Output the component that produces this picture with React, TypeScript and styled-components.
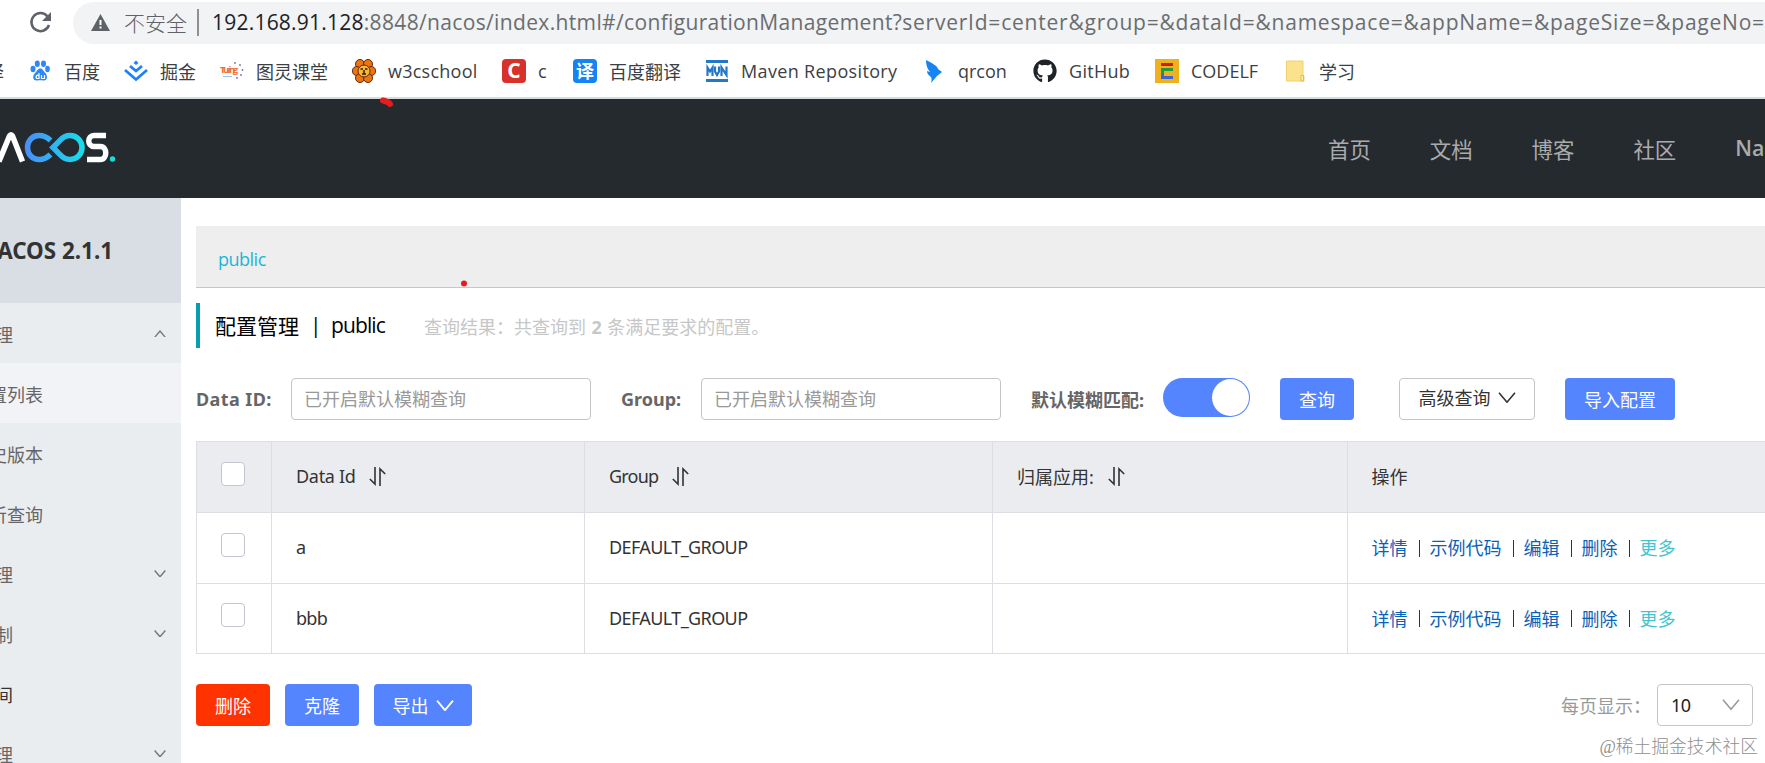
import React from "react";
import styled, { createGlobalStyle } from "styled-components";
import { FaGithub } from "react-icons/fa";

const Global = createGlobalStyle`
  *{box-sizing:border-box}
  html,body,#root{margin:0;height:763px;overflow:hidden;background:#fff}
  body{font-family:"Open Sans","Noto Sans CJK SC",sans-serif;font-size:18px;color:#333}
`;

const Page = styled.div`width:1765px;height:763px;overflow:hidden;position:relative;display:flex;flex-direction:column;`;

const AddressRow = styled.div`display:flex;height:44px;padding-top:1px;align-items:center;flex:none;`;
const NavTools = styled.div`width:73px;display:flex;padding-left:27px;svg{display:block}`;
const Omnibox = styled.div`
  flex:1;height:42px;background:#f1f3f4;border-radius:21px 0 0 21px;display:flex;align-items:center;
  padding-left:18px;white-space:nowrap;overflow:hidden;color:#5f6368;font-size:21px;
`;
const Insecure = styled.span`margin:-2px 0 0 14px;width:63px;font-weight:300;`;
const Divider = styled.i`width:2px;height:27px;background:#8d9194;margin:0 13px 0 10px;flex:none;`;
const Url = styled.span<{ $dark?: boolean; $ls: number }>`
  margin-top:-1px;color:${p => (p.$dark ? "#202124" : "#6a6d70")};letter-spacing:${p => p.$ls}px;
`;

const BookmarkRow = styled.div`display:flex;height:53px;align-items:center;flex:none;color:#3c4043;`;
const Bookmark = styled.div<{ $w: number; $ls?: number }>`
  width:${p => p.$w}px;flex:none;display:flex;align-items:center;gap:12px;white-space:nowrap;letter-spacing:${p => p.$ls || 0}px;
  svg{flex:none;display:block}
`;
const CutLabel = styled.div`width:28px;direction:rtl;padding-right:24px;white-space:nowrap;overflow:hidden;`;
const Tile = styled.span<{ $bg: string; $size: number }>`
  width:24px;height:24px;border-radius:4px;background:${p => p.$bg};color:#fff;font-size:${p => p.$size}px;font-weight:700;
  display:flex;align-items:center;justify-content:center;line-height:1;letter-spacing:0;flex:none;
`;

const Header = styled.header`
  height:101px;border-top:2px solid #d5dedb;background:#252a2f;flex:none;display:flex;justify-content:space-between;align-items:center;
`;
const LogoWrap = styled.div`padding-bottom:4px;svg{display:block}`;
const Nav = styled.nav`
  display:flex;gap:59px;width:437px;white-space:nowrap;font-size:21.4px;color:#a9abad;padding-bottom:1px;
`;
const NavItem = styled.span<{ $bold?: boolean }>`font-weight:${p => (p.$bold ? 600 : 400)};`;
const Body = styled.div`display:flex;flex:1;min-height:0;`;

const Sidebar = styled.aside`width:260px;margin-left:-79px;background:#eaedf0;flex:none;`;
const Version = styled.div`
  height:105px;background:#d8dee3;padding:0 68px 0 0;display:flex;align-items:center;justify-content:flex-end;
  font:bold 22.4px "Noto Sans",sans-serif;color:#333;
`;
const MenuItem = styled.div<{ $child?: boolean; $active?: boolean; $dark?: boolean }>`
  height:60px;padding:1px 15px 0 ${p => (p.$child ? 50 : 20)}px;display:flex;align-items:center;justify-content:space-between;
  background:${p => (p.$active ? "#f2f3f7" : "transparent")};color:${p => (p.$dark ? "#333" : "#666")};
`;

const Main = styled.main`flex:1;min-width:0;padding:28px 0 0 15px;`;
const Namespace = styled.div`
  height:62px;background:#eee;border-bottom:1px solid #c7c7c7;display:flex;align-items:center;padding:5px 0 0 22px;color:#1bb6d6;letter-spacing:-.5px;
`;
const Title = styled.div`
  margin-top:15px;height:45px;border-left:4px solid #089eb0;padding:0 0 2px 15px;display:flex;align-items:center;color:#000;font-size:21px;white-space:nowrap;
`;
const TitlePart = styled.span<{ $w: number; $ls?: number }>`width:${p => p.$w}px;flex:none;letter-spacing:${p => p.$ls || 0}px;`;
const Result = styled.span`font-size:18px;color:#c7c7c7;padding-top:2px;b{margin:0 5.5px}`;

const Filters = styled.div`margin-top:30px;height:42px;display:flex;align-items:center;white-space:nowrap;`;
const FieldLabel = styled.label<{ $w: number; $ls?: number }>`
  width:${p => p.$w}px;flex:none;font:bold 18px "Noto Sans","Noto Sans CJK SC",sans-serif;color:#666;letter-spacing:${p => p.$ls || 0}px;
`;
const Field = styled.div`
  width:300px;height:42px;border:1px solid #c3c6c9;border-radius:4px;padding:0 0 2px 12px;display:flex;align-items:center;color:#999;margin-right:30px;flex:none;
`;
const Switch = styled.div`
  width:87px;height:39px;border-radius:20px;background:#5584ff;padding:1px;display:flex;justify-content:flex-end;align-self:flex-start;flex:none;margin-right:30px;
  &::after{content:"";width:37px;height:37px;border-radius:50%;background:#fff}
`;
const Button = styled.div<{ $w: number; $bg?: string; $outline?: boolean }>`
  width:${p => p.$w}px;height:42px;flex:none;border-radius:4px;display:flex;align-items:center;justify-content:center;gap:7px;
  background:${p => (p.$outline ? "#fff" : p.$bg || "#5584ff")};color:${p => (p.$outline ? "#333" : "#fff")};
  border:${p => (p.$outline ? "1px solid #c3c6c9" : "0")};padding-bottom:${p => (p.$outline ? 5 : 1)}px;
  margin:${p => (p.$outline ? "0 30px 0 45px" : "0")};
  svg{margin-top:2px}
`;

const Table = styled.div`margin-top:21px;border:1px solid #dcdee3;border-right:0;`;
const Row = styled.div<{ $head?: boolean; $h: number }>`
  display:grid;grid-template-columns:75px 313px 408px 355px 1fr;height:${p => p.$h}px;background:${p => (p.$head ? "#ebecf0" : "#fff")};
  & + &{border-top:1px solid #dcdee3}
`;
const Cell = styled.div<{ $check?: boolean; $ls?: number }>`
  display:flex;align-items:center;padding:${p => (p.$check ? "0 0 7px 24px" : "0 0 2px 24px")};border-right:1px solid #dcdee3;white-space:nowrap;
  font-family:"Noto Sans","Noto Sans CJK SC",sans-serif;letter-spacing:${p => p.$ls || 0}px;
  &:last-child{border-right:0;padding-left:23.5px}
`;
const Box = styled.span`width:24px;height:24px;border:1px solid #c4c6cf;border-radius:4px;background:#fff;`;
const SortIcon = styled.svg<{ $gap: number }>`margin-left:${p => p.$gap}px;`;
const Link = styled.span<{ $more?: boolean }>`color:${p => (p.$more ? "#45c4cf" : "#0a62b8")};`;
const Bar = styled.i`width:1px;height:17px;background:#333;margin:2px 10px 0 11px;`;

const Footer = styled.div`display:flex;gap:15px;margin-top:30px;align-items:center;`;
const PageSize = styled.div`margin-left:auto;margin-right:12px;display:flex;align-items:center;color:#999;white-space:nowrap;`;
const Select = styled.div`
  width:96px;height:42px;margin-left:6px;border:1px solid #c3c6c9;border-radius:4px;padding:0 12px 0 13px;display:flex;justify-content:space-between;align-items:center;color:#222;
  font-family:"Noto Sans",sans-serif;letter-spacing:-.5px;
`;
const Watermark = styled.div`position:absolute;right:7px;bottom:4px;font:300 17.8px/24px "Liberation Serif","Noto Sans CJK SC",serif;color:#8f8f8f;`;
const Marks = styled.svg`position:absolute;left:370px;top:92px;pointer-events:none;`;

const Chevron = ({ w = 12, up, color = "#777", sw = 1.4 }: { w?: number; up?: boolean; color?: string; sw?: number }) => (
  <svg width={w} height={w * 0.65} viewBox="0 0 18 11.7" fill="none" stroke={color} strokeWidth={(sw * 18) / w}>
    <path d={up ? "M1 11 9 1.5 17 11" : "M1 .7 9 10.2 17 .7"} />
  </svg>
);
const Sort = ({ gap = 13 }: { gap?: number }) => (
  <SortIcon $gap={gap} width="17" height="19" viewBox="0 0 17 19" fill="none" stroke="#333" strokeWidth="1.6">
    <path d="M6 0v17L.8 12M11 19V2l5.2 5" />
  </SortIcon>
);

const Logo = () => (
  <svg width="120" height="40" viewBox="0 0 120 40" fill="none">
    <defs>
      <linearGradient id="lg" gradientUnits="userSpaceOnUse" x1="25" y1="0" x2="85" y2="0">
        <stop offset="0" stopColor="#4a8cf7" /><stop offset="1" stopColor="#16e0ea" />
      </linearGradient>
    </defs>
    <path d="M-1 34.500 9.500 9q1.500-2.500 3 0L22.500 34.500" stroke="#fff" strokeWidth="5.500" />
    <path d="M50.500 13.500C47 10 43 8.500 39 8.500C32 8.500 27.500 14 27.500 20.500S32 32.500 39 32.500c4 0 8-1.500 11.500-5" stroke="url(#lg)" strokeWidth="5.500" />
    <path d="M53 20.500l7-7c3-3.500 6-5 10-5c7 0 12 5.500 12 12s-5 12-12 12c-4 0-7-1.500-10-5z" stroke="url(#lg)" strokeWidth="5.500" />
    <path d="M106 8.500H94c-7 0-7 11 0 11h6.500c7 0 7 13 0 13H87" stroke="#fff" strokeWidth="5.500" />
    <circle cx="112.500" cy="32" r="2.700" fill="#16dfe3" />
  </svg>
);

const Actions = () => (
  <>
    <Link>详情</Link><Bar /><Link>示例代码</Link><Bar /><Link>编辑</Link><Bar /><Link>删除</Link><Bar /><Link $more>更多</Link>
  </>
);

const menu = [
  { t: "配置管理", icon: "up" },
  { t: "配置列表", child: true, active: true },
  { t: "历史版本", child: true },
  { t: "监听查询", child: true },
  { t: "服务管理", icon: "down" },
  { t: "权限控制", icon: "down" },
  { t: "命名空间", dark: true },
  { t: "集群管理", icon: "down" },
];

export default function App() {
  return (
    <Page>
      <Global />
      <AddressRow>
        <NavTools>
          <svg width="26" height="26" viewBox="0 0 26 26" fill="none" stroke="#5f6368" strokeWidth="2.500">
            <path d="M20.500 6.500A9 9 0 1 0 22 15" /><path d="M24 2v9h-9z" fill="#5f6368" stroke="none" />
          </svg>
        </NavTools>
        <Omnibox>
          <svg width="19" height="17" viewBox="0 0 19 17"><path d="M9.500 0 19 17H0z" fill="#5f6368" /><path d="M8.500 6h2v5h-2zM8.500 12.500h2v2h-2z" fill="#fff" /></svg>
          <Insecure>不安全</Insecure>
          <Divider />
          <Url $dark $ls={0.22}>192.168.91.128</Url>
          <Url $ls={0.35}>:8848/nacos/index.html#/configurationManagement?</Url>
          <Url $ls={0.78}>serverId=center&amp;group=&amp;dataId=&amp;namespace=&amp;appName=&amp;pageSize=&amp;pageNo=</Url>
        </Omnibox>
      </AddressRow>
      <BookmarkRow>
        <CutLabel>翻译</CutLabel>
        <Bookmark $w={96}>
          <svg width="24" height="24" viewBox="0 0 24 24"><g fill="#2f86f6"><ellipse cx="5" cy="10" rx="2.500" ry="3.300" /><ellipse cx="9.300" cy="4.800" rx="2.500" ry="3.300" /><ellipse cx="15.500" cy="4.800" rx="2.500" ry="3.300" /><ellipse cx="19.500" cy="10" rx="2.300" ry="3.200" /><path d="M12.300 9.500c2.500 0 3 2.500 5 4.500 2.500 2.500 2.500 8-2 7.500-2-.3-4-.3-6 0-5 .5-5-5-2.200-7.500 2-2 2.500-4.500 5.200-4.500z" /></g><path d="M11 14v5.500H8.800q-1.500-1.700 0-3.200H11M13.500 16v3.500h3V16" stroke="#fff" strokeWidth="1.200" fill="none" /></svg>百度
        </Bookmark>
        <Bookmark $w={96}>
          <svg width="24" height="24" viewBox="0 0 24 24" fill="none" stroke="#1e80ff" strokeWidth="2.800"><path d="M12 1.500 14.500 4 12 6 9.500 4z" fill="#1e80ff" stroke="none" /><path d="m6 7 6 5 6-5M1 11l11 9.500L23 11" /></svg>掘金
        </Bookmark>
        <Bookmark $w={132}>
          <svg width="24" height="24" viewBox="0 0 24 24"><text x="0" y="14" fontSize="9.500" fontWeight="700" fill="#f07030" textLength="18" letterSpacing="0" fontFamily="Open Sans">Turing</text><g fill="#7a6db0"><circle cx="15" cy="4" r=".9" /><circle cx="20" cy="6" r=".9" /><circle cx="22.500" cy="11" r=".9" /><circle cx="21" cy="16" r=".9" /><circle cx="17" cy="19" r=".9" /></g><path d="M3 17.500h9" stroke="#9cc4e8" /></svg>图灵课堂
        </Bookmark>
        <Bookmark $w={150} $ls={0.25}>
          <svg width="24" height="24" viewBox="0 0 24 24"><g fill="#ee7410" stroke="#5a2a10"><circle cx="8" cy="5" r="4.500" /><circle cx="16" cy="5" r="4.500" /><circle cx="4.800" cy="12" r="4.500" /><circle cx="19.200" cy="12" r="4.500" /><circle cx="8" cy="19" r="4.500" /><circle cx="16" cy="19" r="4.500" /></g><circle cx="12" cy="12" r="6" fill="#f7b733" stroke="#5a2a10" /><path d="M8.500 10h2.500m2 0h2.500M12 11v4m-2 0h4" stroke="#3a1a08" strokeWidth="1.500" /></svg>w3cschool
        </Bookmark>
        <Bookmark $w={71}><Tile $bg="#d6322a" $size={21}>C</Tile>c</Bookmark>
        <Bookmark $w={132}><Tile $bg="#1683f2" $size={18}>译</Tile>百度翻译</Bookmark>
        <Bookmark $w={217} $ls={0.35}>
          <svg width="24" height="24" viewBox="0 0 24 24"><path d="M1 1h22v3H1zM1 20h22v3H1z" fill="#2478c8" /><path d="M2.500 17V8.500L5 12.500l2.500-4V17M10 7.500v5l2 3.500 2-3.500v-5M16.500 17V8.500l5 7.500V7.500" fill="none" stroke="#2478c8" strokeWidth="2.200" /></svg>Maven Repository
        </Bookmark>
        <Bookmark $w={111}>
          <svg width="24" height="24" viewBox="0 0 24 24"><path d="M4 1c5 3 11 5 12 9l4 3-5 4-6 7c1-3 .5-5 0-6-3-2-4-4-4-6l3 1C5 9 4 6 4 1z" fill="#1683f7" /></svg>qrcon
        </Bookmark>
        <Bookmark $w={122} $ls={0.3}><FaGithub size={24} color="#1f2328" />GitHub</Bookmark>
        <Bookmark $w={128}>
          <svg width="24" height="24" viewBox="0 0 24 24"><path d="M0 0h24v24H0z" fill="#efb21c" /><path d="M6 5.500h12" stroke="#cb2020" strokeWidth="3" /><path d="M18 10.500H7.500V14" stroke="#1f9b3a" strokeWidth="3" fill="none" /><path d="M7.500 14v4.500H18" stroke="#3b66d6" strokeWidth="3" fill="none" /></svg>CODELF
        </Bookmark>
        <Bookmark $w={90}>
          <svg width="24" height="24" viewBox="0 0 24 24"><path d="M3.500 2h16.500v14l1 1v5H3.500z" fill="#fde28d" stroke="#f0d070" /><path d="M18 22v-5.500h2.500v5.500z" fill="#fff0b5" stroke="#e0bd50" /></svg>学习
        </Bookmark>
      </BookmarkRow>
      <Header>
        <LogoWrap><Logo /></LogoWrap>
        <Nav>
          {["首页", "文档", "博客", "社区"].map(t => <NavItem key={t}>{t}</NavItem>)}
          <NavItem $bold>Nacos</NavItem>
        </Nav>
      </Header>
      <Body>
        <Sidebar>
          <Version>NACOS 2.1.1</Version>
          {menu.map((m, i) => (
            <MenuItem key={i} $child={m.child} $active={m.active} $dark={m.dark}>
              {m.t}{m.icon && <Chevron up={m.icon === "up"} />}
            </MenuItem>
          ))}
        </Sidebar>
        <Main>
          <Namespace>public</Namespace>
          <Title>
            <TitlePart $w={95}>配置管理</TitlePart><TitlePart $w={21}>|</TitlePart><TitlePart $w={93} $ls={-0.9}>public</TitlePart>
            <Result>查询结果：共查询到<b>2</b>条满足要求的配置。</Result>
          </Title>
          <Filters>
            <FieldLabel $w={95} $ls={0.4}>Data ID:</FieldLabel><Field>已开启默认模糊查询</Field>
            <FieldLabel $w={80}>Group:</FieldLabel><Field>已开启默认模糊查询</Field>
            <FieldLabel $w={132}>默认模糊匹配:</FieldLabel><Switch />
            <Button $w={74}>查询</Button>
            <Button $w={136} $outline>高级查询<Chevron w={18} color="#333" sw={1.6} /></Button>
            <Button $w={110}>导入配置</Button>
          </Filters>
          <Table>
            <Row $head $h={70}>
              <Cell $check><Box /></Cell><Cell $ls={-0.3}>Data Id<Sort /></Cell><Cell $ls={-0.8}>Group<Sort gap={14} /></Cell><Cell>归属应用:<Sort gap={14} /></Cell><Cell>操作</Cell>
            </Row>
            {["a", "bbb"].map((id, i) => (
              <Row key={id} $h={i ? 70 : 71}>
                <Cell $check><Box /></Cell><Cell $ls={-0.7}>{id}</Cell><Cell $ls={-0.6}>DEFAULT_GROUP</Cell><Cell /><Cell><Actions /></Cell>
              </Row>
            ))}
          </Table>
          <Footer>
            <Button $w={74} $bg="#ff3300">删除</Button><Button $w={74}>克隆</Button>
            <Button $w={98}>导出<Chevron w={18} color="#fff" sw={1.8} /></Button>
            <PageSize>每页显示：<Select>10<Chevron w={18} color="#999" sw={1.6} /></Select></PageSize>
          </Footer>
        </Main>
      </Body>
      <Watermark>@稀土掘金技术社区</Watermark>
      <Marks width="110" height="200" viewBox="0 0 110 200"><path d="M13 8.500q5 1 7 3.500" fill="none" stroke="#e51c20" strokeWidth="6" strokeLinecap="round" /><circle cx="94" cy="191.500" r="3" fill="#e51c20" /></Marks>
    </Page>
  );
}
